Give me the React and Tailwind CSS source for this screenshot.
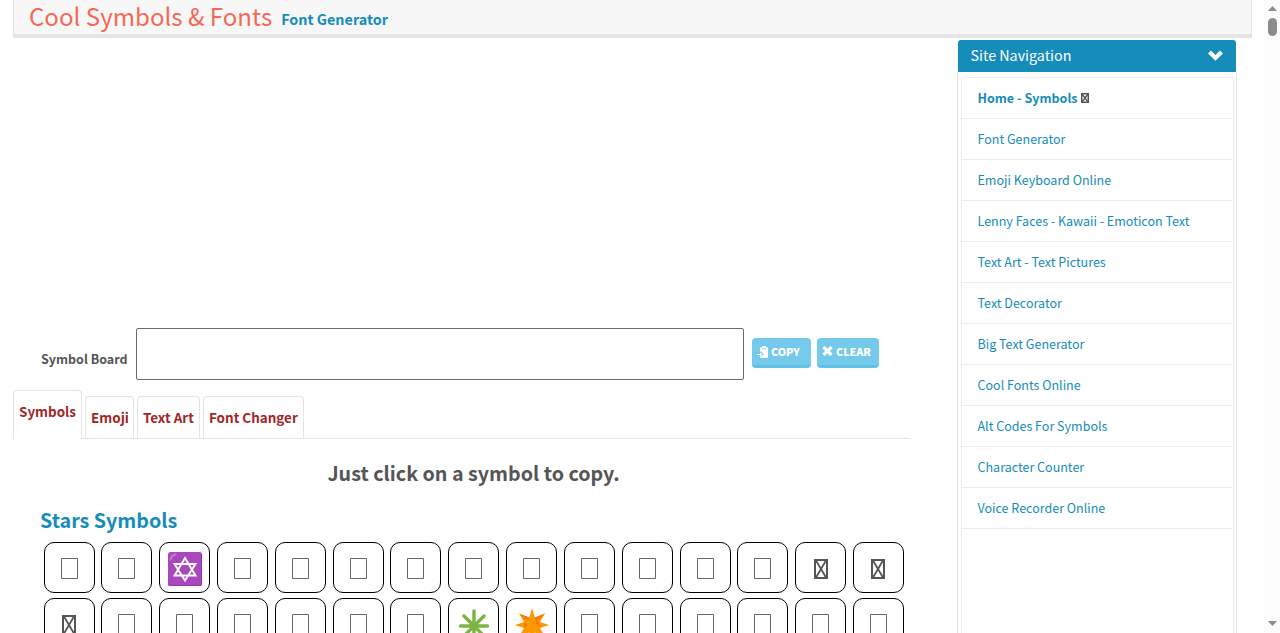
import React from 'react'

const navLinks = [
    'Font Generator',
    'Emoji Keyboard Online',
    'Lenny Faces - Kawaii - Emoticon Text',
    'Text Art - Text Pictures',
    'Text Decorator',
    'Big Text Generator',
    'Cool Fonts Online',
    'Alt Codes For Symbols',
    'Character Counter',
    'Voice Recorder Online',
]

const symbols = [
    'box', 'box', 'david', 'box', 'box', 'box', 'box', 'box', 'box', 'box', 'box', 'box', 'box', 'cross', 'cross',
    'cross', 'box', 'box', 'box', 'box', 'box', 'box', 'asterisk', 'burst', 'box', 'box', 'box', 'box', 'box', 'box',
]

function Glyph({ type }) {
    if (type === 'david') {
        return (
            <svg width="34" height="34" viewBox="0 0 34 34" fill="none">
                <rect width="34" height="34" rx="2.5" fill="#ab47bc" />
                <path d="M0 31.500a3 3 0 0 0 2.500 1.500h28a2.500 2.500 0 0 0 2.500-2.500V2.500a3 3 0 0 1 1 1v28a2.500 2.500 0 0 1-2.500 2.500h-29A2.500 2.500 0 0 1 0 31.500z" fill="#9636a8" />
                <path d="M2.500 7.500C3 5 5 3 7.500 2.500" stroke="#c47fd0" strokeWidth="1.800" strokeLinecap="round" />
                <path d="M17 6 27.500 23.500h-21zM17 28.500 6.500 12h21z" stroke="#fff" strokeWidth="1.900" />
            </svg>
        )
    }
    if (type === 'asterisk') {
        return (
            <svg width="32" height="32" viewBox="0 0 32 32" stroke="#7cb342" strokeWidth="3.400" strokeLinecap="round">
                <path d="M16 2v28M2.500 17h27M6 7l20 20M26 7 6 27" />
            </svg>
        )
    }
    if (type === 'burst') {
        return (
            <svg width="34" height="34" viewBox="0 0 34 34">
                <path d="M17 0l2.800 9.500L30 5.500l-5 8.500L34 17l-9 3 5 8.500-10.200-4L17 34l-2.800-9.500L4 28.500 9 20 0 17l9-3-5-8.500 10.200 4z" fill="#ff9800" />
                <path d="M4 5.500l10.200 4L13 13zM30 5.500l-10.200 4L21 14zM9 14l4 3-4 3zM19.800 9.500l1.200 6 4 4.500-1-5z" fill="#f57c00" />
            </svg>
        )
    }
    if (type === 'cross') {
        return (
            <svg width="14" height="20" viewBox="0 0 14 20" fill="none" stroke="#555">
                <path d="M1 1h12v18H1z" strokeWidth="2" />
                <path d="M2 1.500l10 17M12 1.500l-10 17" strokeWidth="1.800" />
            </svg>
        )
    }
    return (
        <svg width="17" height="21" viewBox="0 0 17 21" fill="none" stroke="#666">
            <path d="M.5.5h16v20H.5z" />
        </svg>
    )
}

function Header() {
    return (
        <header className="ml-[13px] flex h-[38px] w-[1239px] items-start border-x border-b-4 border-[#e5e5e5] bg-[#f7f7f7] pl-[15px]">
            <h1 className="h-[34px] text-[24.1px] leading-[31px] text-[#f56954] whitespace-nowrap">Cool Symbols &amp; Fonts</h1>
            <a className="ml-[9px] pt-[7px] text-[14.35px] leading-[24px] font-bold text-[#158cba] whitespace-nowrap">Font Generator</a>
        </header>
    )
}

function Board() {
    return (
        <div className="mt-[290px] flex h-[52px] pl-[28px]">
            <label className="w-[95px] pt-[20px] text-[12.5px] leading-[22px] font-bold whitespace-nowrap">Symbol Board</label>
            <div className="h-[52px] w-[608px] rounded-[2px] border border-[#6b6b6b] bg-white" />
            <button className="mt-[10px] ml-[8px] flex h-[30px] w-[59px] items-center rounded-[4px] border-b-[3px] border-[#5fc1e8] bg-[#75caeb] pl-[5px] text-[10.7px] leading-[27px] font-black text-white">
                <svg width="12" height="12" viewBox="0 0 12 12" className="mr-[2px]">
                    <path d="M3 1.500h2V0h4v1.500h2V12H3v-1L7 8.500 4 5.500H3z" fill="#fff" />
                    <path d="M0 8h3V6.500l2.500 2L3 10.500V9H0z" fill="#fff" />
                    <path d="M5 2.800h4" stroke="#75caeb" />
                </svg>
                COPY
            </button>
            <button className="mt-[10px] ml-[6px] flex h-[30px] w-[62px] items-center rounded-[4px] border-b-[3px] border-[#5fc1e8] bg-[#75caeb] pl-[5px] text-[10.7px] leading-[27px] font-black text-white">
                <svg width="11" height="10" viewBox="0 0 11 10" className="mr-[3px] mb-px">
                    <path d="M1.500 1l8 8M9.500 1l-8 8" stroke="#fff" strokeWidth="3.200" />
                </svg>
                CLEAR
            </button>
        </div>
    )
}

function Tabs() {
    return (
        <div className="mt-[10px] flex h-[49px] w-[897px] items-end gap-[3px] border-b border-[#e5e5e5] text-[13.45px] leading-[20px] font-bold text-[#a02828]">
            <div className="-mb-px h-[49px] w-[69px] rounded-t-[4px] border border-b-0 border-[#e5e5e5] bg-white pt-[10px] pl-[5px] whitespace-nowrap">Symbols</div>
            <div className="h-[42px] w-[49px] rounded-t-[4px] border border-b-0 border-[#e5e5e5] pt-[10px] pl-[5px] whitespace-nowrap">Emoji</div>
            <div className="h-[42px] w-[63px] rounded-t-[4px] border border-b-0 border-[#e5e5e5] pt-[10px] pl-[5px] whitespace-nowrap">Text Art</div>
            <div className="h-[42px] w-[101px] rounded-t-[4px] border border-b-0 border-[#e5e5e5] pt-[10px] pl-[5px] whitespace-nowrap">Font Changer</div>
        </div>
    )
}

function Sidebar() {
    return (
        <aside className="mt-[2px] ml-[47px] flex h-[593px] w-[280px] shrink-0 flex-col">
            <div className="mr-px ml-px flex h-[32px] shrink-0 items-center justify-between rounded-t-[3px] bg-[#158cba] pr-[13px] pl-[12.5px] text-[14.3px] leading-[30px] text-white">
                <span className="pb-[2px]">Site Navigation</span>
                <svg width="15" height="11" viewBox="0 0 15 11" className="mb-[2px]">
                    <path d="M1.500 2l6 6 6-6" fill="none" stroke="#fff" strokeWidth="4" />
                </svg>
            </div>
            <div className="flex-1 border-x border-[#e5e5e5] pr-[2px] pl-[3px] pt-[5px]">
                <ul className="h-full rounded-t-[4px] border border-b-0 border-[#ededed] pr-px text-[12.53px] leading-[40px] text-[#158cba]">
                    <li className="flex h-[41px] items-center border-b border-[#ededed] pl-[15.5px] font-bold">
                        Home - Symbols
                        <svg width="8" height="10" viewBox="0 0 8 10" fill="none" stroke="#555" className="ml-[3px]">
                            <path d="M.75.75h6.500v8.500H.75z" strokeWidth="1.500" />
                            <path d="M1 1l6 8M7 1 1 9" strokeWidth="1.300" />
                        </svg>
                    </li>
                    {navLinks.map((link) => (
                        <li key={link} className="h-[41px] border-b border-[#ededed] pl-[15.5px] whitespace-nowrap">{link}</li>
                    ))}
                </ul>
            </div>
        </aside>
    )
}

function ScrollBar() {
    return (
        <div className="flex h-[633px] w-[16px] shrink-0 flex-col items-center bg-[#fcfcfc]">
            <svg width="9" height="5" viewBox="0 0 9 5" className="mt-[6px]"><path d="M4.500 0 9 5H0z" fill="#8b8b8b" /></svg>
            <div className="mt-[7px] h-[18px] w-[9px] rounded-full bg-[#8b8b8b]" />
            <svg width="9" height="5" viewBox="0 0 9 5" className="mt-auto mb-[7px]"><path d="M0 0h9L4.500 5z" fill="#8b8b8b" /></svg>
        </div>
    )
}

function App() {
    return (
        <div className="flex h-[633px] w-[1280px] overflow-hidden bg-white font-['Noto_Sans_CJK_SC',sans-serif] text-[#555]">
            <div className="w-[1264px] shrink-0">
                <Header />
                <div className="flex pl-[13px]">
                    <main className="h-[595px] w-[897px] shrink-0 overflow-hidden">
                        <Board />
                        <Tabs />
                        <h2 className="mt-[18px] h-[32px] pl-[24px] text-center text-[19.7px] leading-[32px] font-bold">Just click on a symbol to copy.</h2>
                        <h3 className="mt-[15px] h-[32px] pl-[27px] text-[19.7px] leading-[32px] font-bold text-[#158cba]">Stars Symbols</h3>
                        <div className="mt-[6px] ml-[30.62px] grid w-[860.5px] grid-cols-[repeat(15,51px)] justify-between gap-y-[5px]">
                            {symbols.map((type, index) => (
                                <div key={index} className="flex h-[51px] w-[51px] items-center justify-center rounded-[10px] border border-black pt-[2px]">
                                    <Glyph type={type} />
                                </div>
                            ))}
                        </div>
                    </main>
                    <Sidebar />
                </div>
            </div>
            <ScrollBar />
        </div>
    )
}

export default App
